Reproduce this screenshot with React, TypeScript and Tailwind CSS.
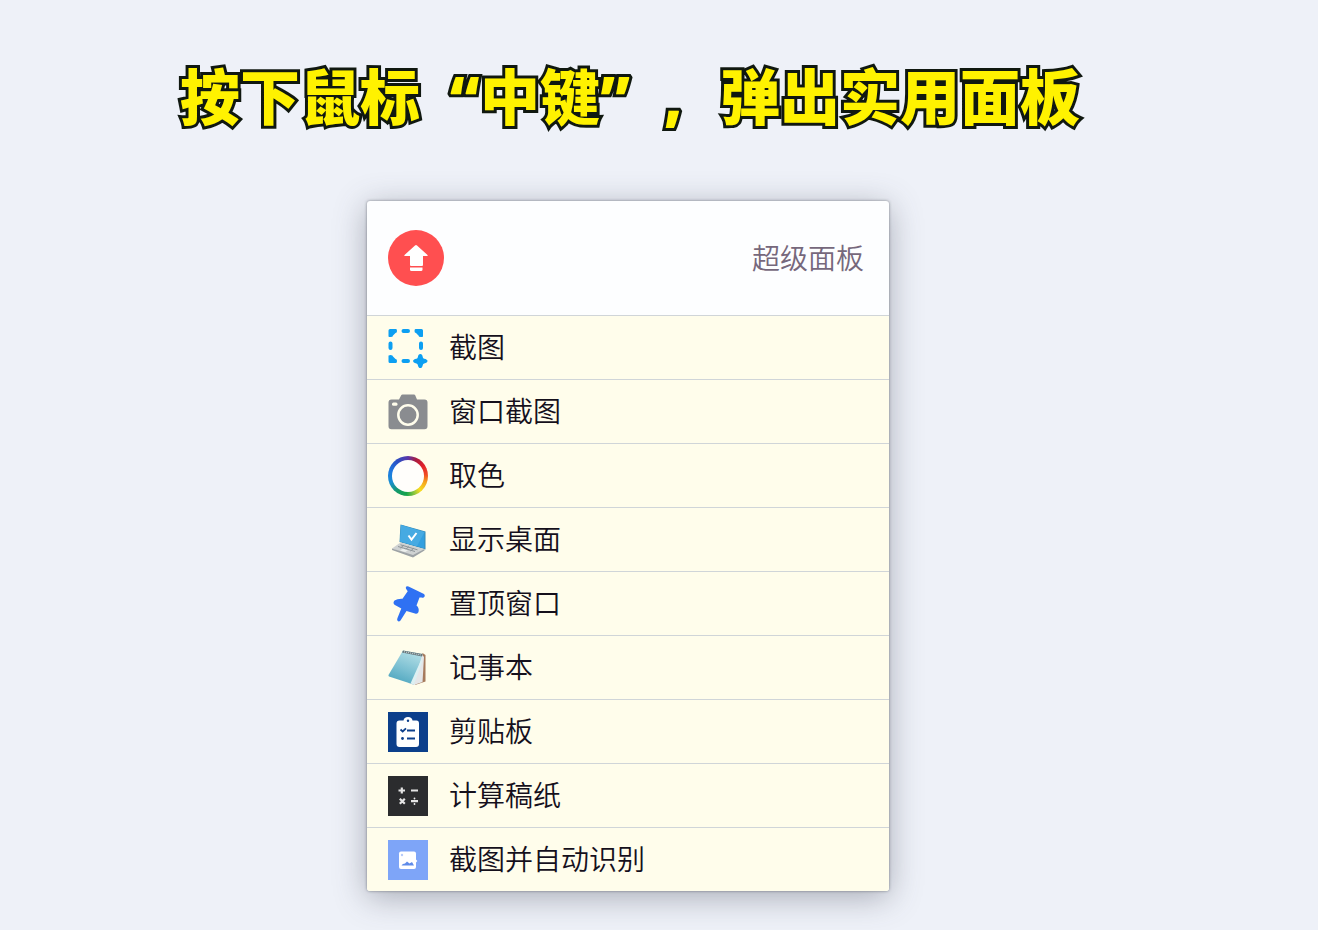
import type { ReactNode } from "react";

function CaptureIcon() {
  return (
    <svg viewBox="0 0 40 40" className="size-10" aria-hidden="true">
      <path
        d="M2 1H8Q9 1 9 3T7.500 5L5 7.500Q5 9 2.500 9T.5 7.500V2.500Q.5 1 2 1ZM33.500 1H27.500Q26.500 1 26.500 3T28 5L30.500 7.500Q30.500 9 33 9T35 7.500V2.500Q35 1 33.500 1ZM2 35H8Q9 35 9 33T7.500 31L5 28.500Q5 27 2.500 27T.5 28.500V33.500Q.5 35 2 35Z"
        fill="#0c9ff2"
      />
      <g fill="none" stroke="#0c9ff2" strokeWidth="4" strokeLinecap="round">
        <path d="M15.500 3h4.500M2.500 15.500v4.500M33 15.500v4.500M15.500 33h4.500" />
      </g>
      <path
        d="M32.300 26q2 0 2.500 3.300q.2 1.200 1.400 1.400q3.300.6 3.300 2.400t-3.300 2.400q-1.200.2-1.400 1.400q-.5 3.100-2.500 3.100t-2.500-3.100q-.2-1.200-1.400-1.400q-3.300-.6-3.300-2.400t3.300-2.400q1.200-.2 1.400-1.400q.5-3.300 2.500-3.300z"
        fill="#0c9ff2"
      />
    </svg>
  );
}

function CameraIcon() {
  return (
    <svg viewBox="0 0 40 40" className="size-10" aria-hidden="true">
      <path
        d="M3.500 7.500H11L13.200 3.200Q13.600 2.500 14.500 2.500H26Q26.900 2.500 27.200 3.200L29 7.500H36.500Q39.500 7.500 39.500 10.500V34Q39.500 37.300 36.500 37.300H3.500Q.5 37.300.5 34V10.500Q.5 7.500 3.500 7.500Z"
        fill="#8a8c90"
      />
      <rect x="4" y="10.500" width="5.500" height="3.200" rx="1.500" fill="#fffdec" />
      <circle cx="20" cy="23" r="9.700" fill="none" stroke="#fffdec" strokeWidth="2.500" />
    </svg>
  );
}

function ColorRingIcon() {
  return (
    <span
      aria-hidden="true"
      className="grid size-10 place-items-center rounded-full bg-[conic-gradient(#5b37a8,#a51c42_25deg,#e0202a_55deg,#f04a25_85deg,#f5a51c_110deg,#f6dc20_140deg,#8cc63f_160deg,#16a34a_185deg,#149a67_215deg,#1a8ed2_250deg,#1e7ae0_285deg,#2b4ec2_325deg,#5b37a8)]"
    >
      <span className="size-8 rounded-full bg-[#fffefb]" />
    </span>
  );
}

function DesktopIcon() {
  return (
    <svg viewBox="0 0 40 40" className="size-10" aria-hidden="true">
      <path d="M12.500 4.500L37.500 11.500V29.500L11.500 22Z" fill="#3789b3" />
      <path d="M13 5L36.500 12V28.500L12 21.500Z" fill="#329fdf" />
      <path d="M13 5L36.500 12L29 26.300L12 21.500Z" fill="#46aae2" />
      <path d="M20.500 15.500L23.500 19.500L28.500 13" fill="none" stroke="#fff" strokeWidth="2" />
      <path d="M4 28.500L12.500 22.500L36.500 29L25 36.500Z" fill="#cfd2d2" />
      <path d="M4 28.500L25 35L36.500 29V30.500L25 37.500L4 30Z" fill="#9da2a5" />
      <path d="M10 26.500L27 31.500M12.500 24.800L29.500 29.800M16 25L12.500 28M21 26.500L17.500 29.500M26 28L22.500 31" stroke="#8d9498" strokeWidth="1" />
      <path d="M12 30.500L15 28.800L20 30.300L17.200 32Z" fill="#edf0ee" />
    </svg>
  );
}

function PinIcon() {
  return (
    <svg viewBox="0 0 40 40" className="size-10" aria-hidden="true">
      <path
        d="M18 2.800Q18.900 1.700 20.500 2.500L36 10Q37.300 11 36.500 12.800Q35.500 14.200 33.500 13.500L31.500 13.500L28.500 21.500Q31.500 24 30.500 28Q29.600 30.500 27 29.500L18.500 27L12.500 36.500Q11 38 9.700 37Q8.700 36 9.400 34.300L13.300 24.500L6.500 20.700Q4.500 19 6.500 16.500Q9.500 14.400 14.500 14.700L19.700 7.200L18.200 5Q17.500 4 18 2.800Z"
        fill="#2f71f3"
      />
    </svg>
  );
}

function NotepadIcon() {
  return (
    <svg viewBox="0 0 40 40" className="size-10" aria-hidden="true">
      <defs>
        <linearGradient id="cover" x1="0.700" y1="0" x2="0.300" y2="1">
          <stop offset="0" stopColor="#b4dfe6" />
          <stop offset="0.550" stopColor="#7cc0d2" />
          <stop offset="1" stopColor="#4ca5be" />
        </linearGradient>
      </defs>
      <path d="M34.500 5L37.500 7V33.500L27 37Z" fill="#a67a5c" />
      <path d="M33.500 6L36 9L34.500 34L26 37L20 35Z" fill="#e5e6e8" />
      <path d="M15 2.500L34.500 6L25.500 36.500L1 28.500Q0 28 .800 26.500Z" fill="url(#cover)" />
      <path d="M33.500 11L22.500 35.500L26 36.500L34.500 13Z" fill="#ddf0f2" />
      <path d="M15 2.500L34.500 6L34 8.500L14 4.500Z" fill="#66777c" />
      <path d="M16 3.800l17 3.200" stroke="#d8e0e0" strokeWidth="1" strokeDasharray="1 1" />
    </svg>
  );
}

function ClipboardIcon() {
  return (
    <svg viewBox="0 0 40 40" className="size-10" aria-hidden="true">
      <rect width="40" height="40" fill="#0c3f8b" />
      <path
        d="M11.500 8.500H15.500Q16 5 20 5T24.500 8.500H28.500Q31 8.500 31 11.500V32Q31 35 28 35H11.500Q8.500 35 8.500 32V11.500Q8.500 8.500 11.500 8.500Z"
        fill="#fff"
      />
      <circle cx="20" cy="8.700" r="1.200" fill="#0c3f8b" />
      <path d="M12.500 17.500l2.200 2l3.300-3.200M19 18.500h8M19 26.500h8" fill="none" stroke="#0c3f8b" strokeWidth="1.800" />
      <circle cx="14.500" cy="26.500" r="1.400" fill="#0c3f8b" />
    </svg>
  );
}

function CalculatorIcon() {
  return (
    <svg viewBox="0 0 40 40" className="size-10" aria-hidden="true">
      <rect width="40" height="40" fill="#2b2c2e" />
      <g stroke="#e4e4e4" strokeWidth="2.200">
        <path d="M10.500 14.500h6.500M13.800 11.500v6M23 14.500h7M11.800 22.800l5 5M16.800 22.800l-5 5M23 25.200h7" />
      </g>
      <circle cx="26.500" cy="22.500" r="0.900" fill="#eee" />
      <circle cx="26.500" cy="28" r="0.900" fill="#eee" />
    </svg>
  );
}

function PictureIcon() {
  return (
    <svg viewBox="0 0 40 40" className="size-10" aria-hidden="true">
      <rect width="40" height="40" fill="#7ea5f8" />
      <rect x="11" y="11.500" width="17" height="17.500" rx="2" fill="#fff" />
      <circle cx="14" cy="15" r="1.200" fill="#b6cbfb" />
      <path d="M13.500 25.500Q14.500 23.500 17 23.500L19 21.500L21.500 23.500L24 22L26 25.500Z" fill="#5e8bea" />
      <path d="M28 19.500l1.300 1.500l-1.300 1.500z" fill="#fff" />
    </svg>
  );
}

const actions: { label: string; icon: ReactNode }[] = [
  { label: "截图", icon: <CaptureIcon /> },
  { label: "窗口截图", icon: <CameraIcon /> },
  { label: "取色", icon: <ColorRingIcon /> },
  { label: "显示桌面", icon: <DesktopIcon /> },
  { label: "置顶窗口", icon: <PinIcon /> },
  { label: "记事本", icon: <NotepadIcon /> },
  { label: "剪贴板", icon: <ClipboardIcon /> },
  { label: "计算稿纸", icon: <CalculatorIcon /> },
  { label: "截图并自动识别", icon: <PictureIcon /> },
];

export default function App() {
  return (
    <main
      lang="zh-CN"
      className="flex min-h-screen flex-col items-center bg-[#eef1f8] pt-[54px] pr-[62px] pb-[39px] font-['Noto_Sans_CJK_SC',sans-serif]"
    >
      <h1 className="pl-1 text-[60px] leading-20 font-black whitespace-nowrap text-[#fff200] [-webkit-text-stroke:6px_#101810] [paint-order:stroke_fill]">
        按下鼠标
        <span className="inline-block w-[60px] text-right font-['Noto_Sans',sans-serif]">“</span>
        中键
        <span className="inline-block w-[60px] font-['Noto_Sans',sans-serif]">”</span>
        <span className="inline-block w-[60px] pl-1 font-['Noto_Sans',sans-serif]">,</span>
        弹出实用面板
      </h1>

      <section className="mt-16 w-full max-w-[522px] overflow-hidden rounded-[3px] bg-[#fdfeff] shadow-[0_0_3px_rgba(60,65,75,0.6),0_6px_32px_rgba(70,75,90,0.42)]">
        <header className="flex h-[114px] items-center justify-between pr-[25px] pl-[21px]">
          <button
            type="button"
            aria-label="置顶"
            className="grid size-14 place-items-center rounded-full bg-[#ff4f50]"
          >
            <svg viewBox="0 0 24 28" className="h-7 w-6" fill="#fff" aria-hidden="true">
              <path d="M11 1.500q1-.8 2 0L23.500 11q.8 1-.5 1h-4v9q0 1-1 1h-11q-1 0-1-1v-9H1q-1.300 0-.5-1z" />
              <path d="M6 23.500h12.500v2q0 1.500-1.500 1.500H7.500q-1.500 0-1.500-1.500z" />
            </svg>
          </button>
          <h2 className="pb-[3px] text-[28px] leading-10 font-[350] text-[#76687c]">超级面板</h2>
        </header>

        <ul>
          {actions.map((action) => (
            <li key={action.label} className="border-t border-[#d0d5d8] bg-[#fffdeb]">
              <button
                type="button"
                className="flex h-[63px] w-full items-center gap-[21px] pl-[21px] text-left text-[28px] leading-10 font-[350] text-[#15101c]"
              >
                {action.icon}
                <span className="pb-[3px]">{action.label}</span>
              </button>
            </li>
          ))}
        </ul>
      </section>
    </main>
  );
}
